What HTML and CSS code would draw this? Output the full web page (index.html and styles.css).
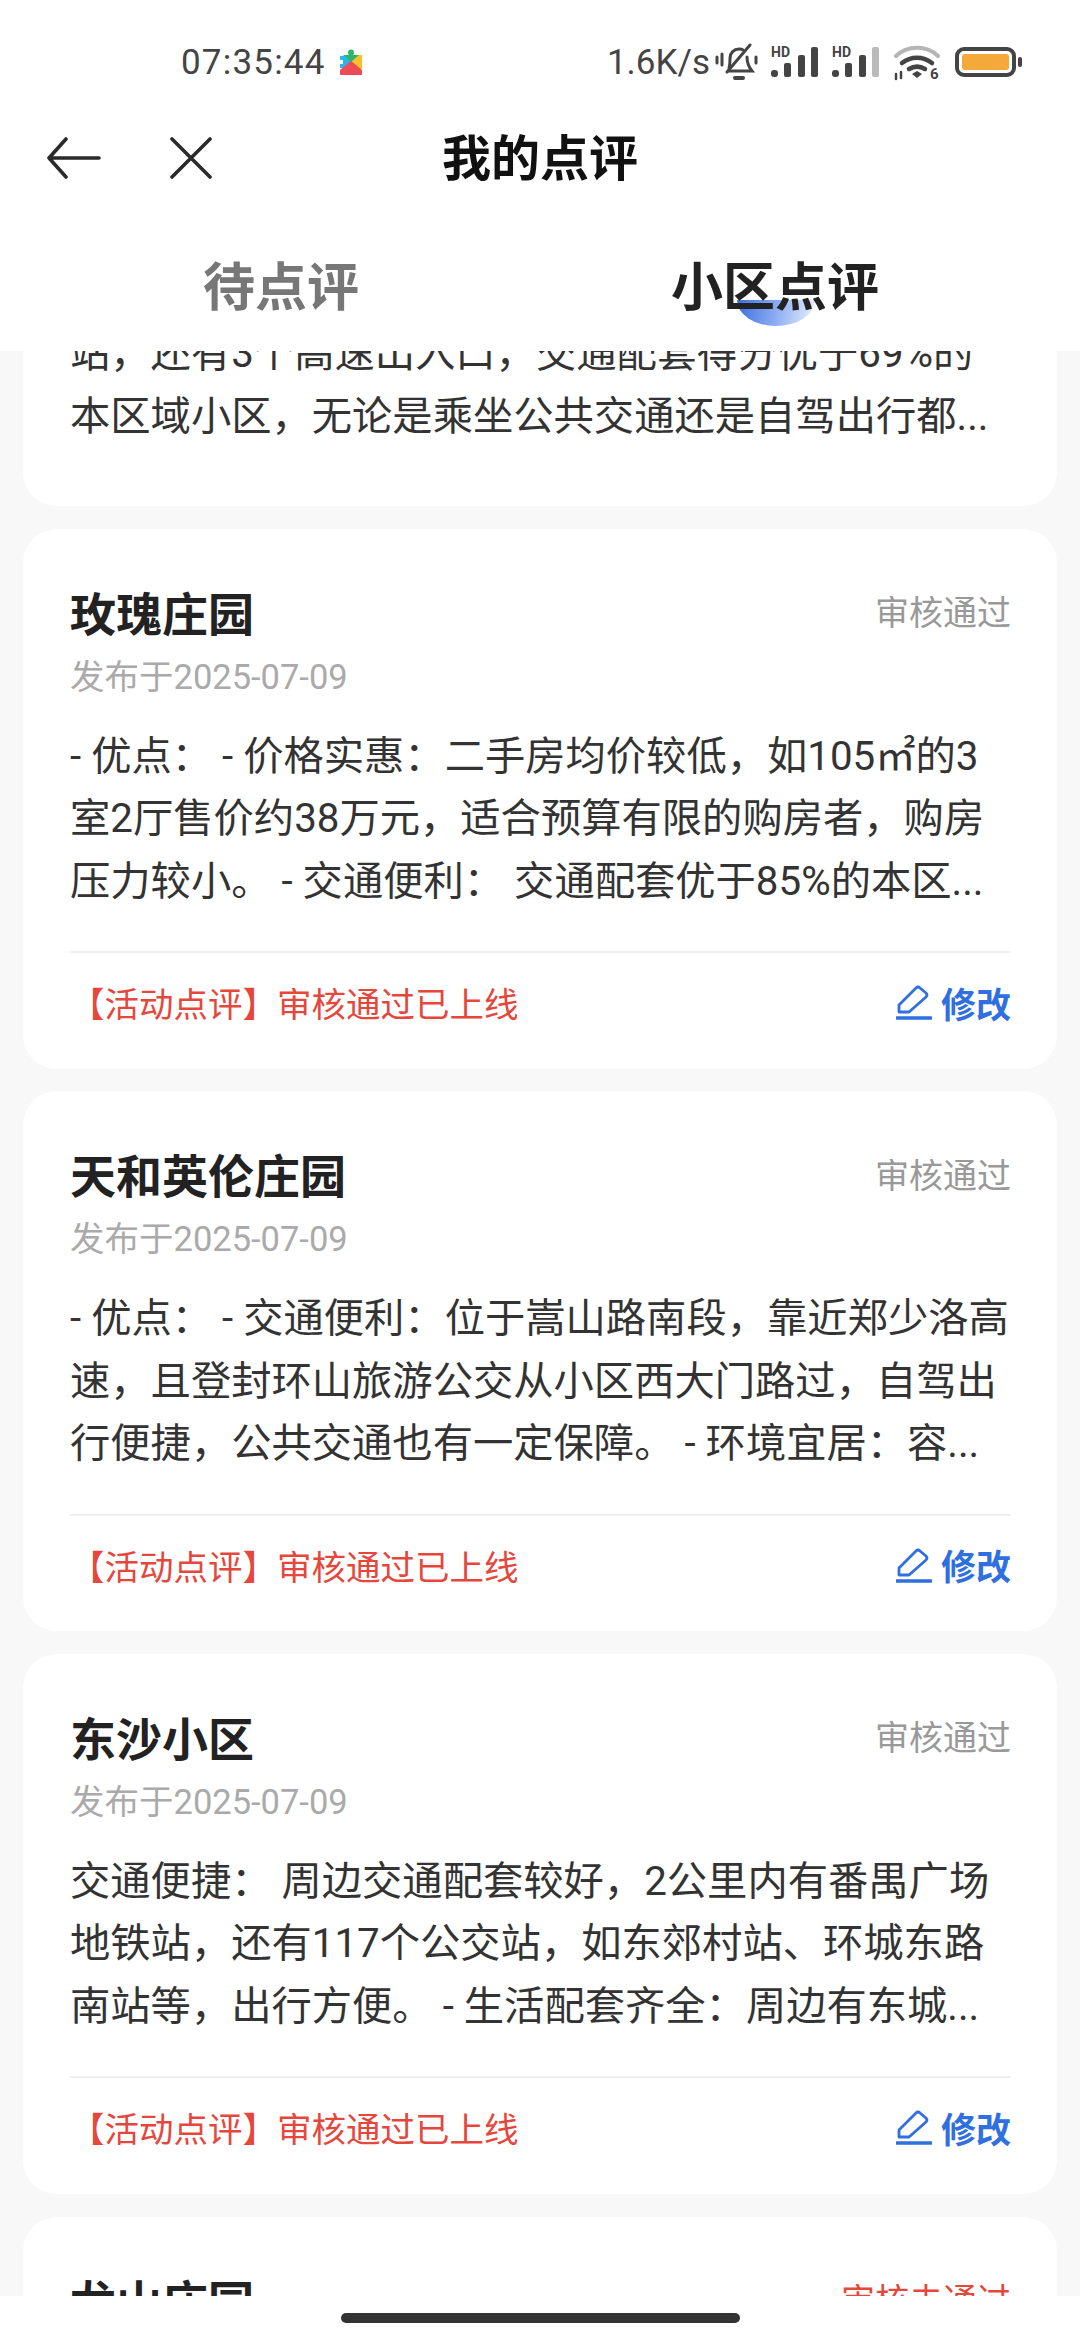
FILE: index.html
```html
<!DOCTYPE html>
<html lang="zh-CN">
<head>
    <meta charset="UTF-8">
    <meta name="viewport" content="width=device-width, initial-scale=1.0">
    <title>我的点评</title>
    <link rel="stylesheet" href="styles.css">
</head>
<body>
<header class="top">
    <div class="status">
        <div class="status-left">
            <span class="clock">07:35:44</span>
            <svg class="puzzle" viewBox="0 0 22 26" width="22" height="26">
                <circle cx="11" cy="3.5" r="3" fill="#2fb56a"/>
                <path d="M3 6h16v4L11 14z" fill="#2fb56a"/>
                <path d="M0 7h5l6 6-6 6H0v-4h3v-4H0z" fill="#29b6e8"/>
                <path d="M19 6h3v14h-3l-8-7z" fill="#fbc02d"/>
                <path d="M11 12l11 9v5H0v-5z" fill="#ef4b56"/>
            </svg>
        </div>
        <div class="status-right">
            <span class="speed">1.6K/s</span>
            <svg class="ico-bell" viewBox="0 0 43 38" width="43" height="38" fill="none" stroke="#444" stroke-width="3" stroke-linecap="round">
                <path d="M14 25c1-3 1-6 1-10 0-5 4-9 9-9 2 0 3 0 4 1"/>
                <path d="M32 14c0 5 1 9 5 14H14"/>
                <path d="M35 2L12 29"/>
                <path d="M20 35h8" stroke-width="4"/>
                <path d="M2 14v6M7 11v11M41 14v6"/>
            </svg>
            <svg class="ico-signal" viewBox="0 0 48 32" width="48" height="32">
                <text class="hd" x="0" y="11">HD</text>
                <rect x="0" y="24" width="7" height="7" rx="3" fill="#444"/>
                <rect x="13" y="17" width="7" height="14" rx="2" fill="#444"/>
                <rect x="27" y="9" width="7" height="22" rx="2" fill="#444"/>
                <rect x="40" y="1" width="7" height="30" rx="2" fill="#444"/>
            </svg>
            <svg class="ico-signal" viewBox="0 0 48 32" width="48" height="32">
                <text class="hd" x="0" y="11">HD</text>
                <rect x="0" y="24" width="7" height="7" rx="3" fill="#444"/>
                <rect x="13" y="17" width="7" height="14" rx="2" fill="#444"/>
                <rect x="27" y="9" width="7" height="22" rx="2" fill="#444"/>
                <rect x="40" y="1" width="7" height="30" rx="2" fill="#bbb"/>
            </svg>
            <svg class="ico-wifi" viewBox="0 0 50 38" width="50" height="38" fill="none" stroke-linecap="round">
                <path d="M3 13C14 2 34 2 45 13" stroke="#b5b5b5" stroke-width="4"/>
                <path d="M9 20c9-7 21-7 30 0" stroke="#444" stroke-width="4.5"/>
                <path d="M16 26c5-3 11-3 16 0" stroke="#444" stroke-width="4.5"/>
                <path d="M24 28l5 3-5 4-5-4z" fill="#444"/>
                <path d="M3 31v5M8 29v6" stroke="#444" stroke-width="2.5"/>
                <text class="six" x="37" y="36">6</text>
            </svg>
            <svg class="ico-battery" viewBox="0 0 68 30" width="68" height="30">
                <rect x="2" y="2" width="57" height="26" rx="7" fill="none" stroke="#444" stroke-width="4"/>
                <rect x="7" y="7" width="47" height="16" rx="3" fill="#f5a93a"/>
                <rect x="63" y="10" width="4" height="10" rx="2" fill="#444"/>
            </svg>
        </div>
    </div>
    <nav class="nav">
        <svg class="ico-back" viewBox="0 0 54 42" width="54" height="42" fill="none" stroke="#2a2a2a" stroke-width="3.6" stroke-linecap="round" stroke-linejoin="round">
            <path d="M19 2L2 21l17 19M2 21h50"/>
        </svg>
        <svg class="ico-close" viewBox="0 0 42 42" width="42" height="42" fill="none" stroke="#2a2a2a" stroke-width="3.6" stroke-linecap="round">
            <path d="M2 2l38 38M40 2L2 40"/>
        </svg>
        <h1 class="nav-title">我的点评</h1>
    </nav>
    <div class="tabs">
        <div class="tab">待点评</div>
        <div class="tab active"><span class="tab-mark"></span><span class="tab-label">小区点评</span></div>
    </div>
</header>

<main class="scroller">
    <div class="list">
        <article class="card card-cut">
            <p class="body">站，还有3个高速出入口，交通配套得分优于69%的本区域小区，无论是乘坐公共交通还是自驾出行都...</p>
        </article>

        <article class="card">
            <div class="card-head">
                <h2 class="name">玫瑰庄园</h2>
                <span class="state">审核通过</span>
            </div>
            <div class="date">发布于2025-07-09</div>
            <p class="body body-3">- 优点： - 价格实惠：二手房均价较低，如105㎡的3室2厅售价约38万元，适合预算有限的购房者，购房压力较小。 - 交通便利： 交通配套优于85%的本区...</p>
            <div class="card-foot">
                <span class="note">【活动点评】审核通过已上线</span>
                <span class="edit">
                    <svg viewBox="0 0 36 36" width="36" height="36" fill="none" stroke="#2f6fe0" stroke-width="2.8" stroke-linejoin="round" stroke-linecap="round">
                        <path d="M3 21L20 4q2-2 4 0l6 5q2 2 0 4L13 28H3z"/>
                        <path d="M1 34h34" stroke-width="3.4"/>
                    </svg>
                    修改
                </span>
            </div>
        </article>

        <article class="card">
            <div class="card-head">
                <h2 class="name">天和英伦庄园</h2>
                <span class="state">审核通过</span>
            </div>
            <div class="date">发布于2025-07-09</div>
            <p class="body body-3">- 优点： - 交通便利：位于嵩山路南段，靠近郑少洛高速，且登封环山旅游公交从小区西大门路过，自驾出行便捷，公共交通也有一定保障。 - 环境宜居：容...</p>
            <div class="card-foot">
                <span class="note">【活动点评】审核通过已上线</span>
                <span class="edit">
                    <svg viewBox="0 0 36 36" width="36" height="36" fill="none" stroke="#2f6fe0" stroke-width="2.8" stroke-linejoin="round" stroke-linecap="round">
                        <path d="M3 21L20 4q2-2 4 0l6 5q2 2 0 4L13 28H3z"/>
                        <path d="M1 34h34" stroke-width="3.4"/>
                    </svg>
                    修改
                </span>
            </div>
        </article>

        <article class="card">
            <div class="card-head">
                <h2 class="name">东沙小区</h2>
                <span class="state">审核通过</span>
            </div>
            <div class="date">发布于2025-07-09</div>
            <p class="body body-3">交通便捷： 周边交通配套较好，2公里内有番禺广场地铁站，还有117个公交站，如东郊村站、环城东路南站等，出行方便。 - 生活配套齐全：周边有东城...</p>
            <div class="card-foot">
                <span class="note">【活动点评】审核通过已上线</span>
                <span class="edit">
                    <svg viewBox="0 0 36 36" width="36" height="36" fill="none" stroke="#2f6fe0" stroke-width="2.8" stroke-linejoin="round" stroke-linecap="round">
                        <path d="M3 21L20 4q2-2 4 0l6 5q2 2 0 4L13 28H3z"/>
                        <path d="M1 34h34" stroke-width="3.4"/>
                    </svg>
                    修改
                </span>
            </div>
        </article>

        <article class="card">
            <div class="card-head">
                <h2 class="name">龙山庄园</h2>
                <span class="state state-bad">审核未通过</span>
            </div>
        </article>
    </div>
</main>

<footer class="home-bar">
    <div class="home-pill"></div>
</footer>
</body>
</html>
```

FILE: styles.css
```css
* {
    box-sizing: border-box;
}

html, body {
    margin: 0;
    padding: 0;
}

body {
    width: 1080px;
    height: 2340px;
    display: flex;
    flex-direction: column;
    overflow: hidden;
    background-color: #f8f8f8;
    font-family: Roboto, "Noto Sans CJK SC", sans-serif;
    color: #333;
}

.top {
    height: 351px;
    flex-shrink: 0;
    background-color: #fff;
}

/* status bar */
.status {
    height: 124px;
    display: flex;
    justify-content: space-between;
    align-items: center;
    padding: 0 57px 0 181px;
    color: #444;
    font-size: 35px;
}

.status svg {
    overflow: visible;
}

.status-left {
    display: flex;
    align-items: center;
    gap: 14px;
}

.clock {
    letter-spacing: 1.2px;
}

.status-right {
    display: flex;
    align-items: center;
}

.speed {
    margin-right: 5px;
}

.ico-signal {
    margin-left: 13px;
}

.ico-wifi {
    margin-left: 13px;
}

.ico-battery {
    margin-left: 12px;
}

.hd {
    font: 700 14px Roboto, sans-serif;
    fill: #444;
}

.six {
    font: 700 15px Roboto, sans-serif;
    fill: #444;
}

/* nav */
.nav {
    position: relative;
    height: 68px;
    display: flex;
    align-items: center;
    padding-left: 47px;
}

.ico-close {
    margin-left: 69px;
}

.nav-title {
    position: absolute;
    left: 0;
    right: 0;
    top: 2px;
    margin: 0;
    text-align: center;
    font-size: 49px;
    line-height: 68px;
    font-weight: 700;
    color: #111;
}

/* tabs */
.tabs {
    display: flex;
    padding: 62px 58px 0 34px;
}

.tab {
    flex: 1;
    position: relative;
    text-align: center;
    font-size: 52px;
    line-height: 70px;
    font-weight: 700;
    color: #777;
}

.tab.active {
    color: #222;
}

.tab-label {
    position: relative;
}

.tab-mark {
    position: absolute;
    left: 209px;
    top: 46px;
    width: 78px;
    height: 26px;
    border-radius: 0 0 39px 39px / 0 0 26px 26px;
    background: linear-gradient(100deg, #3a6fe0 0%, #8cacf2 50%, #eef2fd 100%);
}

/* list */
.scroller {
    flex: 1;
    min-height: 0;
    overflow: hidden;
}

.list {
    display: flex;
    flex-direction: column;
    gap: 22.67px;
    margin-top: -28px;
    padding: 0 23px;
}

.card {
    height: 540px;
    flex-shrink: 0;
    padding: 50px 46px 0 47px;
    background-color: #fff;
    border-radius: 34px;
}

.card-cut {
    height: auto;
    padding: 0 46px 58px 47px;
}

.card-head {
    display: flex;
    justify-content: space-between;
    align-items: center;
    height: 64px;
}

.name {
    margin: 0;
    font-size: 46px;
    font-weight: 700;
    color: #222;
}

.state {
    font-size: 34px;
    color: #999;
}

.state-bad {
    color: #e5473c;
}

.date {
    margin-top: 9px;
    font-size: 34.5px;
    line-height: 50px;
    color: #aaa;
}

.body {
    margin: 0;
    font-size: 40.3px;
    line-height: 62.5px;
    color: #333;
}

.body-3 {
    margin-top: 24px;
}

.card-foot {
    margin-top: 38px;
    height: 100px;
    border-top: 2px solid #f0f0f0;
    display: flex;
    justify-content: space-between;
    align-items: center;
}

.note {
    font-size: 34.5px;
    color: #e5473c;
}

.edit {
    display: flex;
    align-items: center;
    gap: 9px;
    font-size: 35px;
    font-weight: 700;
    color: #2f6fe0;
}

/* home indicator */
.home-bar {
    height: 44px;
    flex-shrink: 0;
    background-color: #fff;
    padding-top: 17px;
}

.home-pill {
    width: 399px;
    height: 10px;
    margin: 0 auto;
    border-radius: 5px;
    background-color: #333;
}
```
